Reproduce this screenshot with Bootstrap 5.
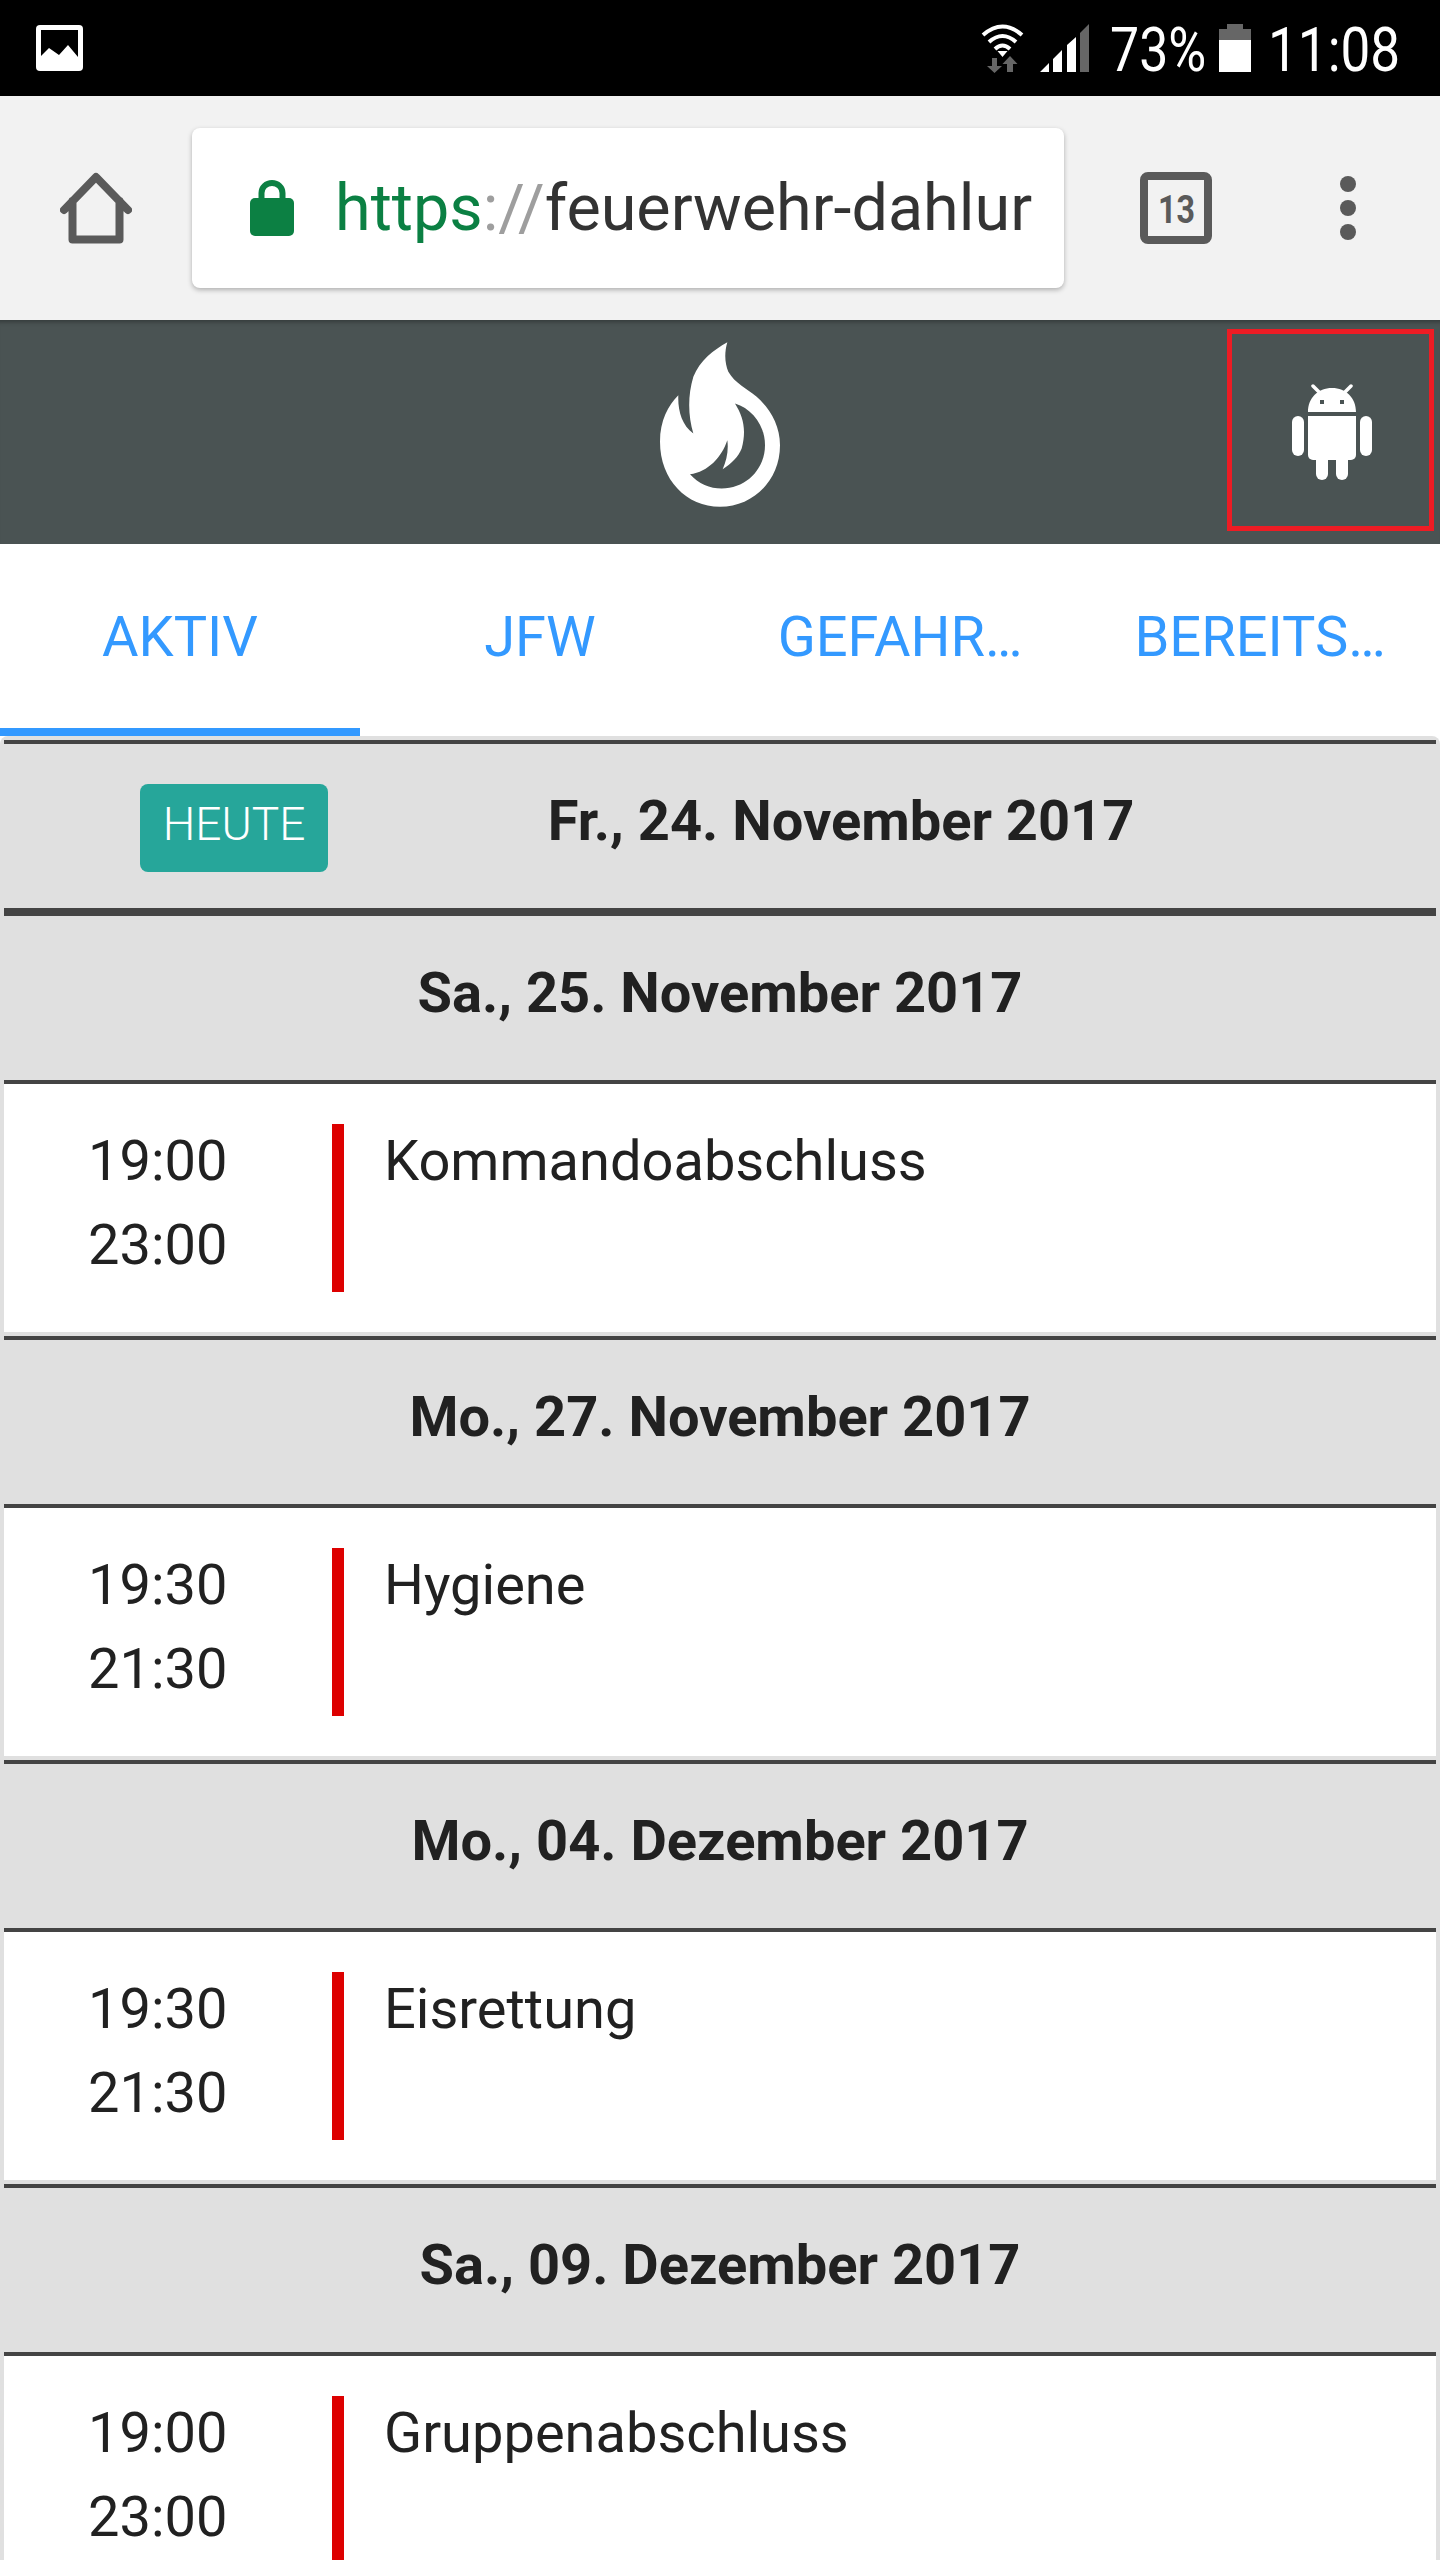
<!DOCTYPE html>
<html lang="de">
<head>
<meta charset="utf-8">
<title>Termine</title>
<link href="https://cdn.jsdelivr.net/npm/bootstrap@5.3.0/dist/css/bootstrap.min.css" rel="stylesheet">
<style>
html,body{height:2560px;overflow:hidden;background:#fff}
body{font-family:Roboto,"Liberation Sans",sans-serif;color:#212121}
svg{display:block;flex:none}
.status-bar{height:96px;background:#000;color:#fff;padding:0 42px 0 36px}
.status-txt{display:block;font-size:61px;line-height:96px;transform:scaleX(.85);transform-origin:left center;white-space:nowrap;height:96px;margin-top:4px}
.st-pct{width:95px;margin-left:21px}
.st-time{width:130px;margin-left:17px;transform:scaleX(.87)}
.st-batt{margin-left:14px}
.st-sig{margin-left:16px}
.tool-bar{height:224px;background:#f2f2f2;padding-left:60px}
.url-box{width:872px;height:160px;margin-left:60px;background:#fff;border-radius:8px;box-shadow:0 2px 5px rgba(0,0,0,.28);padding-left:58px}
.url-txt{margin-left:41px;font-size:64.7px;line-height:1.3;color:#333;white-space:nowrap}
.url-https{color:#0b8043}
.url-sep{color:#9e9e9e}
.tabs-ico{margin-left:76px}
.menu-ico{margin-left:128px}
.app-bar{height:224px;background:#4a5353;box-shadow:inset 0 6px 4px -4px rgba(0,0,0,.3);display:grid;grid-template-columns:1fr auto 1fr}
.flame{margin-top:22px}
.droid-box{justify-self:end;width:207px;height:202px;margin:9px 6px 0 0;border:5px solid #ed1c24}
.droid-ico{margin:3px 0 0 3px}
.tab-row{height:192px}
.tab-row .nav-link{height:192px;padding:10px 0 16px;font-size:56px;line-height:1;color:#39f;display:flex;align-items:center;justify-content:center;white-space:nowrap}
.tab-row .tab-on{border-bottom:8px solid #39f;padding-bottom:8px}
.tab-item{width:360px}
.day-list{background:#e0e0e0;padding:4px 4px 0;border-radius:8px 8px 0 0}
.day-head{border-top:4px solid #444;border-bottom:4px solid #444;background:#e0e0e0;height:172px;font-size:56px;font-weight:700;line-height:84px;padding-top:35px}
.badge-col{width:242px;flex:none;padding:5px 0 0 136px}
.today-tag{display:block;width:188px;height:88px;background:#26a69a;color:#fff;border-radius:8px;font-size:46px;font-weight:300;line-height:80px}
.entry{background:#fff;height:248px;margin-bottom:4px;padding:40px 0;font-size:56px;line-height:84px}
.entry-txt{margin-top:-5px}
.time-col{width:328px;flex:none;padding-left:84px}
.mark-bar{width:12px;height:168px;background:#d00;flex:none}
.entry-name{margin-left:40px}
</style>
</head>
<body>
<div class="status-bar d-flex align-items-center">
  <svg width="47" height="46" viewBox="0 0 47 46"><rect width="47" height="46" rx="4" fill="#fff"/><path d="M5 5H42V32L32 20L23 30L13 23L5 31Z" fill="#000"/></svg>
  <div class="flex-grow-1"></div>
  <svg width="43" height="49" viewBox="0 0 43 49"><g fill="none" stroke="#fff" stroke-width="4"><path d="M2 11Q21.500 -6 41 11"/><path d="M8 18Q21.500 6 35 18"/><path d="M14 25Q21.500 18 29 25"/></g><path d="M16.500 27H26.500L21.500 33Z" fill="#fff"/><path d="M11 34V42H6L13.500 49L21 42H16V34ZM26 48V40H21.500L29 32L36.500 40H32V48Z" fill="#666"/></svg>
  <svg class="st-sig" width="49" height="48" viewBox="0 0 49 48"><path d="M0 48L9 39V48ZM13 35L22 26V48H13ZM27 21L36 13V48H27Z" fill="#fff"/><path d="M40 9L49 0V48H40Z" fill="#666"/></svg>
  <span class="status-txt st-pct">73%</span>
  <svg class="st-batt" width="32" height="48" viewBox="0 0 32 48"><path d="M8 0H24V5H32V16H0V5H8Z" fill="#666"/><rect y="16" width="32" height="32" fill="#fff"/></svg>
  <span class="status-txt st-time">11:08</span>
</div>

<div class="tool-bar d-flex align-items-center">
  <svg width="72" height="72" viewBox="0 0 72 72" fill="none" stroke="#5a5a5a" stroke-width="8" stroke-linecap="round" stroke-linejoin="round"><path d="M4 38L36 5L68 38M12.500 29V67.500H59.500V29"/></svg>
  <div class="url-box d-flex align-items-center">
    <svg width="44" height="56" viewBox="0 0 44 56"><rect y="18" width="44" height="38" rx="5" fill="#0c8043"/><path d="M11.500 22V13a10.500 10 0 0 1 21 0V22" fill="none" stroke="#0c8043" stroke-width="6"/></svg>
    <div class="url-txt"><span class="url-https">https</span><span class="url-sep">://</span>feuerwehr-dahlur</div>
  </div>
  <svg class="tabs-ico" width="72" height="72" viewBox="0 0 72 72"><rect x="4" y="4" width="64" height="64" rx="4" fill="none" stroke="#5a5a5a" stroke-width="8"/><text x="18" y="51" font-family="Roboto" font-weight="700" font-size="39" fill="#5a5a5a" textLength="37" lengthAdjust="spacingAndGlyphs">13</text></svg>
  <svg class="menu-ico" width="16" height="64" viewBox="0 0 16 64" fill="#5a5a5a"><circle cx="8" cy="8" r="8"/><circle cx="8" cy="32" r="8"/><circle cx="8" cy="56" r="8"/></svg>
</div>

<div class="app-bar">
  <div></div>
  <svg class="flame" width="120" height="165" viewBox="150 66 360 494"><path fill="#fff" fill-rule="evenodd" d="M352 66C342 100 345 130 355 155C375 190 410 205 440 230C480 265 510 315 510 375C510 480 430 560 330 560C230 560 150 480 150 365C150 300 175 255 205 225C203 270 215 315 250 340C235 290 232 230 250 170C270 120 310 90 352 66ZM375 250C400 290 410 330 395 385C385 410 365 430 338 447C350 420 356 390 352 360C335 410 295 455 240 462C265 490 300 505 335 505C410 505 465 445 465 375C465 315 425 265 375 250Z"/></svg>
  <div class="droid-box d-flex align-items-center justify-content-center">
    <svg class="droid-ico" width="80" height="96" viewBox="0 0 80 96" fill="#fff"><rect y="32" width="12" height="40" rx="6"/><rect x="68" y="32" width="12" height="40" rx="6"/><path d="M16 32H64V71a5 5 0 0 1-5 5H21a5 5 0 0 1-5-5Z"/><rect x="24" y="70" width="12" height="26" rx="6"/><rect x="44" y="70" width="12" height="26" rx="6"/><path fill-rule="evenodd" d="M16 28C16 14 26 4 40 4C54 4 64 14 64 28ZM28 16V20H32V16ZM48 16V20H52V16Z"/><path d="M21 2L28 9M59 2L52 9" stroke="#fff" stroke-width="3.500" stroke-linecap="round"/></svg>
  </div>
</div>

<ul class="nav tab-row flex-nowrap">
  <li class="nav-item tab-item"><a class="nav-link tab-on" href="#">AKTIV</a></li>
  <li class="nav-item tab-item"><a class="nav-link" href="#">JFW</a></li>
  <li class="nav-item tab-item"><a class="nav-link" href="#">GEFAHR…</a></li>
  <li class="nav-item tab-item"><a class="nav-link" href="#">BEREITS…</a></li>
</ul>

<div class="day-list">
  <div class="day-head d-flex align-items-start">
    <div class="badge-col"><span class="today-tag text-center">HEUTE</span></div>
    <div class="flex-grow-1 text-center">Fr., 24. November 2017</div>
  </div>
  <div class="day-head text-center">Sa., 25. November 2017</div>
  <div class="entry d-flex">
    <div class="time-col entry-txt">19:00<br>23:00</div>
    <div class="mark-bar"></div>
    <div class="entry-name entry-txt">Kommandoabschluss</div>
  </div>
  <div class="day-head text-center">Mo., 27. November 2017</div>
  <div class="entry d-flex">
    <div class="time-col entry-txt">19:30<br>21:30</div>
    <div class="mark-bar"></div>
    <div class="entry-name entry-txt">Hygiene</div>
  </div>
  <div class="day-head text-center">Mo., 04. Dezember 2017</div>
  <div class="entry d-flex">
    <div class="time-col entry-txt">19:30<br>21:30</div>
    <div class="mark-bar"></div>
    <div class="entry-name entry-txt">Eisrettung</div>
  </div>
  <div class="day-head text-center">Sa., 09. Dezember 2017</div>
  <div class="entry d-flex">
    <div class="time-col entry-txt">19:00<br>23:00</div>
    <div class="mark-bar"></div>
    <div class="entry-name entry-txt">Gruppenabschluss</div>
  </div>
</div>
<script src="https://cdn.jsdelivr.net/npm/bootstrap@5.3.0/dist/js/bootstrap.bundle.min.js"></script>
</body>
</html>
